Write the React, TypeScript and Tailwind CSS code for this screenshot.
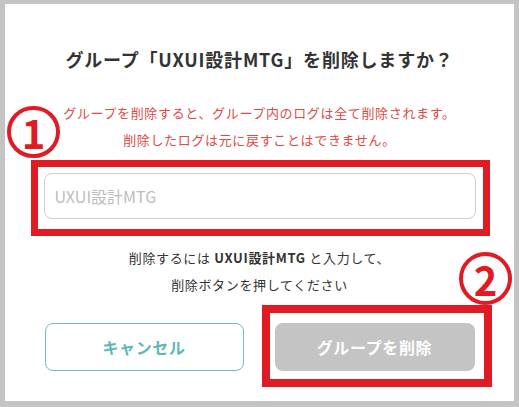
import React from "react";

const font = { fontFamily: '"Noto Sans CJK JP", "Noto Sans", sans-serif' };

export default function App() {
  return (
    <div className="relative w-[519px] h-[407px] bg-[#c4c4c4] pt-[4px] pl-[5px]" style={font}>
      <div className="w-[509px] h-[397px] bg-white flex flex-col items-center pt-[42px]">
        <h1 className="text-[18px] leading-[27px] font-bold text-[#333333] tracking-[0.045em]">
          グループ「UXUI設計MTG」を削除しますか？
        </h1>
        <div className="mt-[26px] text-[13px] leading-[27px] text-[#e04a45] tracking-[0.05em] text-center">
          <p>グループを削除すると、グループ内のログは全て削除されます。</p>
          <p>削除したログは元に戻すことはできません。</p>
        </div>
        <input
          className="mt-[20px] w-[432px] h-[46px] rounded-[8px] border border-[#cccccc] px-[10px] text-[16px] placeholder:text-[#bdbdbd] outline-none"
          placeholder="UXUI設計MTG"
        />
        <div className="mt-[25px] text-[13px] leading-[27px] text-[#333333] tracking-[0.05em] text-center">
          <p>
            削除するには <span className="font-bold">UXUI設計MTG</span> と入力して、
          </p>
          <p>削除ボタンを押してください</p>
        </div>
        <div className="mt-[25px] flex gap-[31px]">
          <button className="w-[199px] h-[48px] rounded-[8px] border border-[#6cc0c0] bg-white text-[16px] font-bold text-[#5fb8b8] tracking-[0.04em]">
            キャンセル
          </button>
          <button className="w-[200px] h-[48px] rounded-[8px] bg-[#c4c4c4] text-[16px] font-bold text-white tracking-[0.04em]">
            グループを削除
          </button>
        </div>
      </div>

      {/* annotations */}
      <div className="absolute left-[31px] top-[160px] w-[459px] h-[76px] border-[7px] border-[#e01b24]" />
      <div className="absolute left-[262px] top-[305px] w-[230px] h-[82px] border-[8px] border-[#e01b24]" />
      <div className="absolute left-[7px] top-[106px] w-[53px] h-[52px] rounded-full border-[4px] border-[#e01b24] bg-white flex items-center justify-center text-[40px] font-bold text-[#e01b24] leading-none">
        1
      </div>
      <div className="absolute left-[459px] top-[252px] w-[53px] h-[53px] rounded-full border-[4px] border-[#e01b24] bg-white flex items-center justify-center text-[40px] font-bold text-[#e01b24] leading-none">
        2
      </div>
    </div>
  );
}
